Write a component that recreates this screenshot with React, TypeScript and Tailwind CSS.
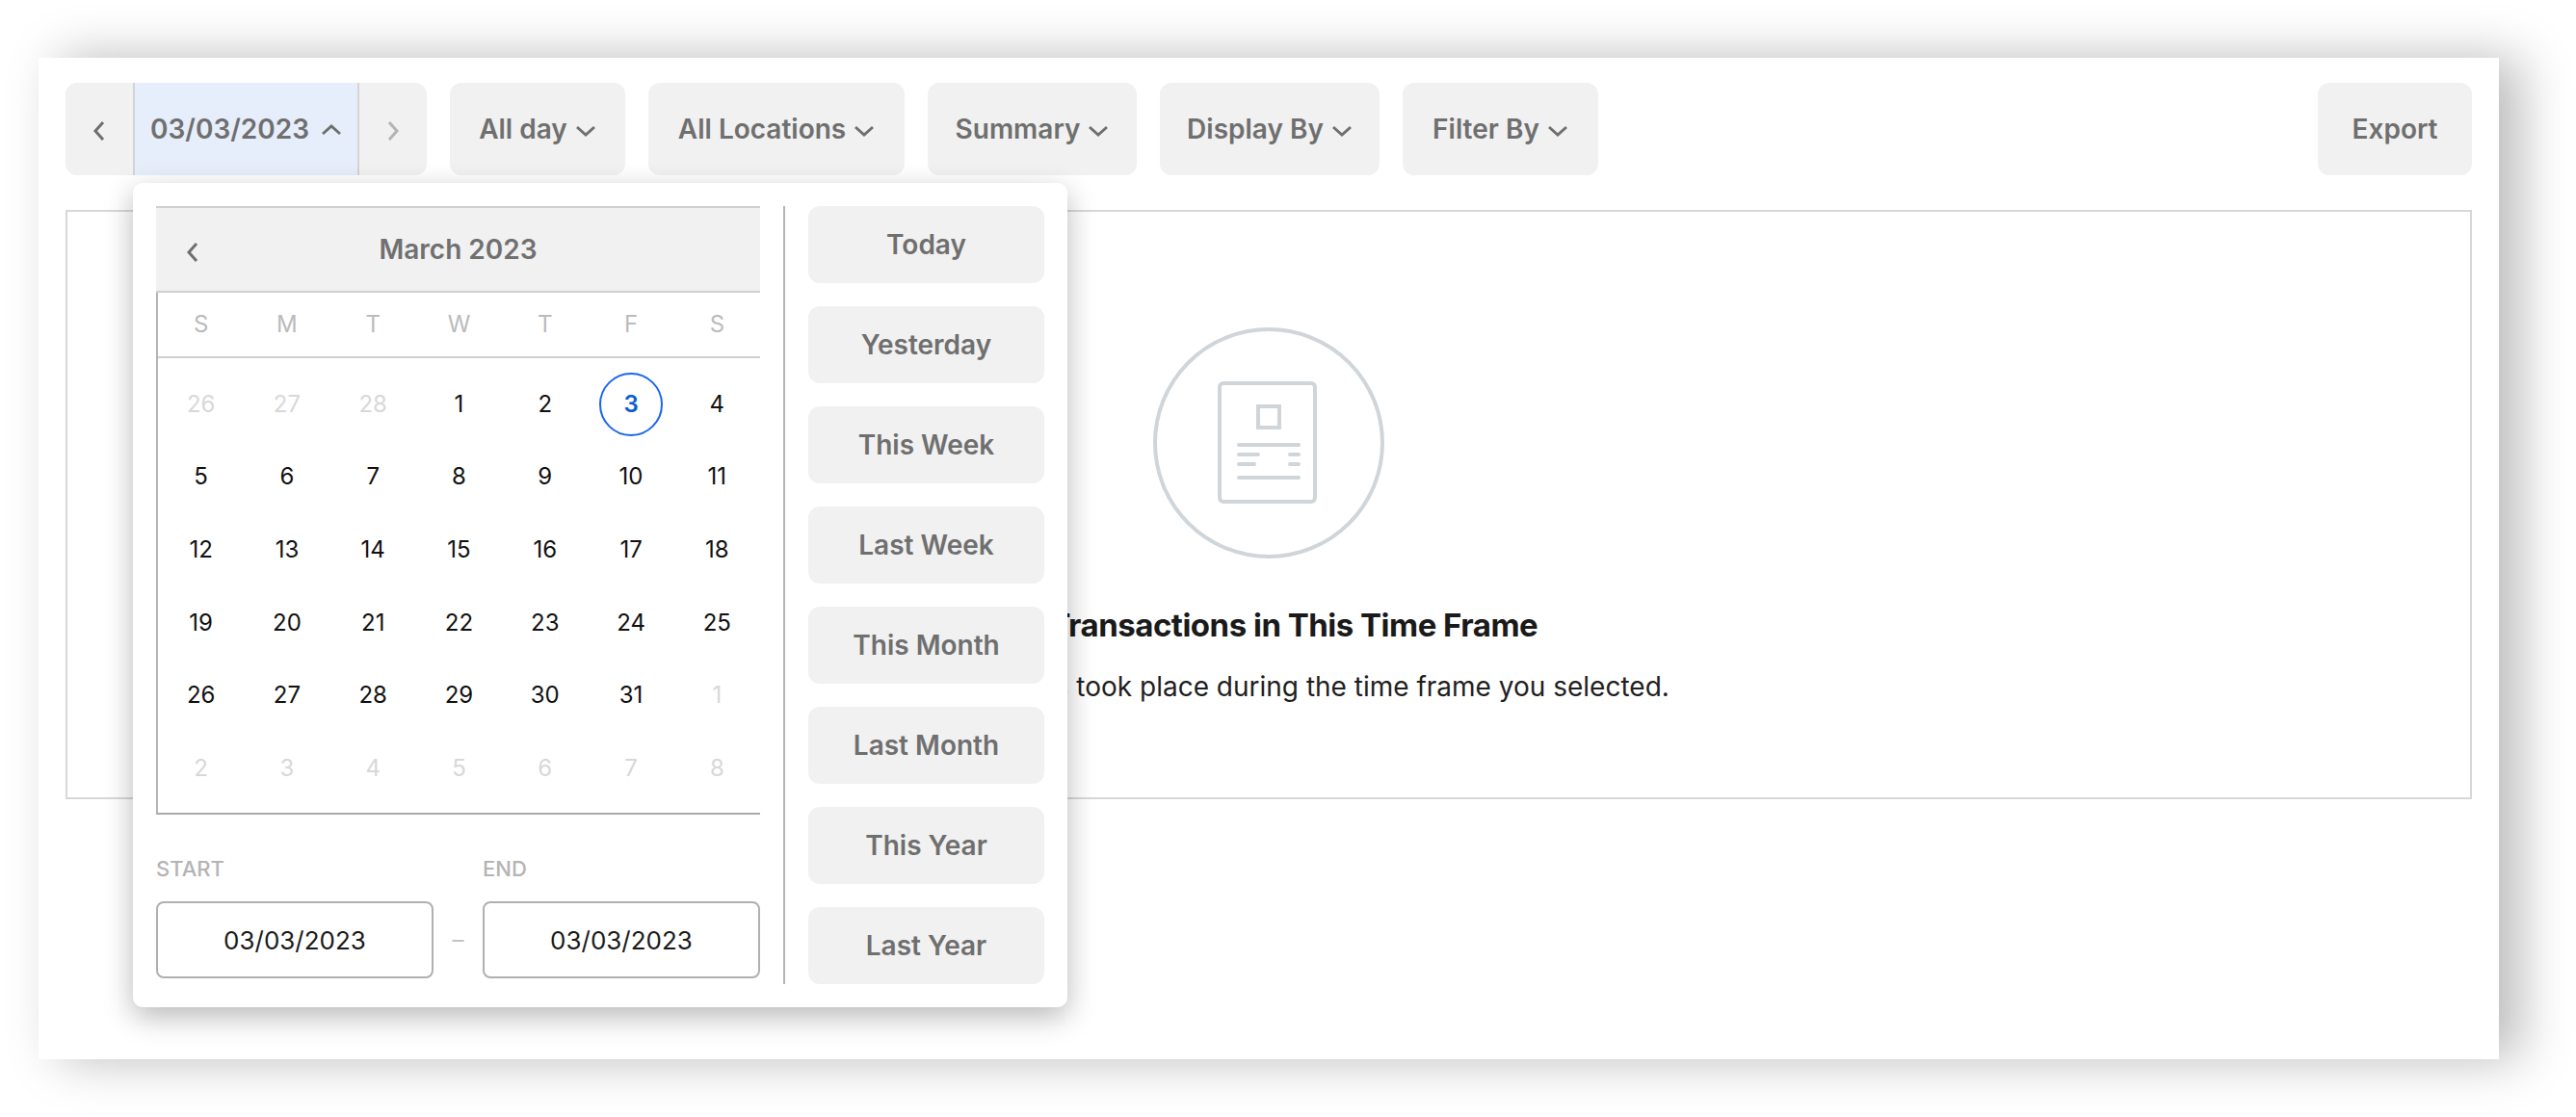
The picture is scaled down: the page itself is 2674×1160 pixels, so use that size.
import React from "react";

const font = { fontFamily: "Inter, 'Liberation Sans', sans-serif" };

function Chevron({ dir, className }: { dir: "left" | "right" | "up" | "down"; className?: string }) {
  const horizontal = dir === "left" || dir === "right";
  const d = {
    left: "M11 2 L3 11 L11 20",
    right: "M3 2 L11 11 L3 20",
    up: "M2 11 L11 3 L20 11",
    down: "M2 3 L11 11 L20 3",
  }[dir];
  return (
    <svg
      width={horizontal ? 14 : 22}
      height={horizontal ? 22 : 14}
      viewBox={horizontal ? "0 0 14 22" : "0 0 22 14"}
      fill="none"
      stroke="currentColor"
      strokeWidth="3"
      className={className}
    >
      <path d={d} />
    </svg>
  );
}

function ToolButton({ label, width }: { label: string; width: string }) {
  return (
    <button className={`flex h-[96px] items-center justify-center gap-[8px] rounded-[12px] bg-[#f1f1f1] text-[28px] font-semibold text-[#6f6f6f] ${width}`}>
      {label}
      <Chevron dir="down" className="mt-[4px]" />
    </button>
  );
}

const rows: [number, number][][] = [
  [[26, 0], [27, 0], [28, 0], [1, 1], [2, 1], [3, 2], [4, 1]],
  [[5, 1], [6, 1], [7, 1], [8, 1], [9, 1], [10, 1], [11, 1]],
  [[12, 1], [13, 1], [14, 1], [15, 1], [16, 1], [17, 1], [18, 1]],
  [[19, 1], [20, 1], [21, 1], [22, 1], [23, 1], [24, 1], [25, 1]],
  [[26, 1], [27, 1], [28, 1], [29, 1], [30, 1], [31, 1], [1, 0]],
  [[2, 0], [3, 0], [4, 0], [5, 0], [6, 0], [7, 0], [8, 0]],
];

const presets = ["Today", "Yesterday", "This Week", "Last Week", "This Month", "Last Month", "This Year", "Last Year"];

function DateInput({ width }: { width: string }) {
  return (
    <div className={`flex h-[80px] items-center justify-center rounded-[8px] border-2 border-[#b0b0b0] bg-white text-[26px] text-[#1a1a1a] ${width}`}>
      03/03/2023
    </div>
  );
}

function Popover() {
  return (
    <div className="absolute left-[98px] top-[130px] z-10 flex h-[856px] w-[970px] rounded-[10px] bg-white pl-[24px] pt-[24px] shadow-[0_10px_30px_rgba(0,0,0,0.28)]">
      <div className="flex w-[627px] flex-col">
        <div className="relative flex h-[90px] items-center justify-center border-y-2 border-[#d0d0d0] bg-[#f1f1f1] text-[28px] font-semibold text-[#707070]">
          <Chevron dir="left" className="absolute left-[31px] top-[35px] text-[#6f6f6f]" />
          March 2023
        </div>
        <div className="border-b-2 border-l-2 border-[#b4b4b4] border-b-[#aaaaaa]">
          <div className="grid h-[68px] grid-cols-7 items-center border-b-2 border-[#d0d0d0] text-center text-[24px] text-[#bbbbbb]">
            {["S", "M", "T", "W", "T", "F", "S"].map((d, i) => (
              <div key={i}>{d}</div>
            ))}
          </div>
          <div className="grid h-[472px] grid-cols-7 grid-rows-6 items-center pb-[8px] pt-[10px] text-center text-[24px]">
            {rows.flat().map(([n, kind], i) =>
              kind === 2 ? (
                <div key={i} className="flex justify-center">
                  <div className="flex h-[66px] w-[66px] items-center justify-center rounded-full border-2 border-[#1a66f0] font-semibold text-[#0b5cd9]">
                    {n}
                  </div>
                </div>
              ) : (
                <div key={i} className={kind === 1 ? "text-[#111111]" : "text-[#d8d8d8]"}>
                  {n}
                </div>
              )
            )}
          </div>
        </div>
        <div className="mt-[44px] flex items-end">
          <div className="flex flex-col gap-[22px]">
            <div className="text-[22px] font-medium leading-[24px] text-[#b4b4b4]">START</div>
            <DateInput width="w-[288px]" />
          </div>
          <div className="flex h-[80px] w-[51px] items-center justify-center text-[24px] text-[#c4c4c4]">–</div>
          <div className="flex flex-col gap-[22px]">
            <div className="text-[22px] font-medium leading-[24px] text-[#b4b4b4]">END</div>
            <DateInput width="w-[288px]" />
          </div>
        </div>
      </div>
      <div className="ml-[24px] h-[808px] w-[2px] bg-[#b4b4b4]" />
      <div className="ml-[24px] flex w-[245px] flex-col gap-[24px]">
        {presets.map((p) => (
          <button key={p} className="flex h-[80px] items-center justify-center rounded-[12px] bg-[#f1f1f1] text-[28px] font-semibold text-[#6f6f6f]">
            {p}
          </button>
        ))}
      </div>
    </div>
  );
}

export default function App() {
  return (
    <div style={font} className="h-[1160px] w-[2674px] overflow-hidden bg-white pl-[40px] pt-[60px]">
      <div className="relative h-[1040px] w-[2554px] bg-white px-[28px] pt-[26px] shadow-[22px_0_50px_rgba(0,0,0,0.27)]">
        <div className="flex gap-[24px]">
          <div className="flex h-[96px] w-[375px] overflow-hidden rounded-[12px] bg-[#f1f1f1]">
            <div className="flex w-[70px] items-center justify-center text-[#6f6f6f]">
              <Chevron dir="left" className="mt-[4px]" />
            </div>
            <div className="flex w-[235px] items-center justify-center gap-[12px] border-x-2 border-[#d4d4d4] bg-[#e7eefb] text-[28px] font-semibold text-[#6f6f6f]">
              03/03/2023
              <Chevron dir="up" className="mt-[2px]" />
            </div>
            <div className="flex w-[70px] items-center justify-center text-[#b4b4b4]">
              <Chevron dir="right" className="mt-[4px]" />
            </div>
          </div>
          <ToolButton label="All day" width="w-[182px]" />
          <ToolButton label="All Locations" width="w-[266px]" />
          <ToolButton label="Summary" width="w-[217px]" />
          <ToolButton label="Display By" width="w-[228px]" />
          <ToolButton label="Filter By" width="w-[203px]" />
          <button className="ml-auto flex h-[96px] w-[160px] items-center justify-center rounded-[12px] bg-[#f1f1f1] text-[28px] font-semibold text-[#6f6f6f]">
            Export
          </button>
        </div>

        <div className="mt-[36px] flex h-[612px] flex-col items-center border-2 border-[#d8d8d8] pt-[120px]">
          <svg width="240" height="240" viewBox="0 0 240 240" fill="none" stroke="#d0d5d9" strokeWidth="4">
            <circle cx="120" cy="120" r="118" />
            <rect x="69" y="58" width="99" height="123" rx="4" />
            <rect x="109" y="82" width="22" height="22" />
            <path strokeLinecap="round" d="M89 122 H151 M89 132 H109 M142 132 H151 M89 142 H105 M142 142 H151 M89 156 H151" />
          </svg>
          <h2 className="mt-[49px] text-[33px] font-bold leading-[40px] tracking-[-0.5px] text-[#1a1a1a]">No Transactions in This Time Frame</h2>
          <p className="mt-[24px] text-[28px] leading-[40px] text-[#1f1f1f]">No transactions took place during the time frame you selected.</p>
        </div>

        <Popover />
      </div>
    </div>
  );
}
